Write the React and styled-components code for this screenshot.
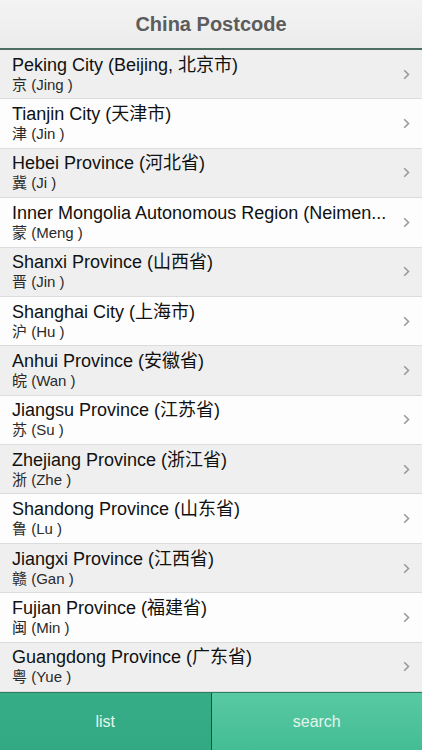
import React from "react";
import styled, { createGlobalStyle } from "styled-components";

const Global = createGlobalStyle`
  html, body { margin: 0; padding: 0; background: #fff; }
  body { font-family: "Liberation Sans", "Noto Sans CJK SC", Arial, sans-serif; }
  * { box-sizing: border-box; }
`;

const Screen = styled.div`
  width: 422px;
  height: 750px;
  display: flex;
  flex-direction: column;
  overflow: hidden;
`;

const Header = styled.header`
  height: 50px;
  flex: none;
  display: flex;
  align-items: center;
  justify-content: center;
  background: linear-gradient(#f3f3f3, #ececec);
  border-bottom: 2px solid #4f6e62;
`;

const Title = styled.h1`
  margin: 0;
  font-size: 20px;
  font-weight: bold;
  color: #5c5c5c;
`;

const List = styled.ul`
  list-style: none;
  margin: 0;
  padding: 0;
  flex: 1;
  display: grid;
  grid-template-rows: repeat(13, 1fr);
`;

const Row = styled.li`
  display: flex;
  align-items: center;
  padding: 0 12px 0 12px;
  background: ${(p) => (p.$alt ? "#fdfdfd" : "#efefef")};
  border-bottom: 1px solid #dcdcdc;
  min-width: 0;
`;

const Texts = styled.div`
  flex: 1;
  min-width: 0;
  display: flex;
  flex-direction: column;
  padding-right: 4px;
`;

const Name = styled.div`
  font-size: 18px;
  line-height: 21px;
  color: #111;
  white-space: nowrap;
`;

const Sub = styled.div`
  font-size: 15px;
  line-height: 18px;
  color: #2a2a2a;
`;

const Chevron = styled.svg`
  flex: none;
  width: 7px;
  height: 11px;
`;

const TabBar = styled.nav`
  height: 58px;
  flex: none;
  display: flex;
  border-top: 1px solid #2f7c62;
`;

const Tab = styled.button`
  flex: 1;
  border: none;
  margin: 0;
  padding: 0;
  font-family: inherit;
  font-size: 16px;
  color: #e3f6ee;
  background: ${(p) =>
    p.$active
      ? "linear-gradient(#36ad87, #33a983)"
      : "linear-gradient(#58c9a3, #44bd94)"};
  border-left: ${(p) => (p.$divider ? "1px solid #1f4f40" : "none")};
`;

const rows = [
  ["Peking City (Beijing, 北京市)", "京 (Jing )"],
  ["Tianjin City (天津市)", "津 (Jin )"],
  ["Hebei Province (河北省)", "冀 (Ji )"],
  ["Inner Mongolia Autonomous Region (Neimen...", "蒙 (Meng )"],
  ["Shanxi Province (山西省)", "晋 (Jin )"],
  ["Shanghai City (上海市)", "沪 (Hu )"],
  ["Anhui Province (安徽省)", "皖 (Wan )"],
  ["Jiangsu Province (江苏省)", "苏 (Su )"],
  ["Zhejiang Province (浙江省)", "浙 (Zhe )"],
  ["Shandong Province (山东省)", "鲁 (Lu )"],
  ["Jiangxi Province (江西省)", "赣 (Gan )"],
  ["Fujian Province (福建省)", "闽 (Min )"],
  ["Guangdong Province (广东省)", "粤 (Yue )"],
];

export default function App() {
  return (
    <Screen>
      <Global />
      <Header>
        <Title>China Postcode</Title>
      </Header>
      <List>
        {rows.map(([name, sub], i) => (
          <Row key={name} $alt={i % 2 === 1}>
            <Texts>
              <Name>{name}</Name>
              <Sub>{sub}</Sub>
            </Texts>
            <Chevron viewBox="0 0 7 11">
              <path d="M1.2 1.2 L5.5 5.5 L1.2 9.8" fill="none" stroke="#9a9a9a" strokeWidth="1.6" />
            </Chevron>
          </Row>
        ))}
      </List>
      <TabBar>
        <Tab $active>list</Tab>
        <Tab $divider>search</Tab>
      </TabBar>
    </Screen>
  );
}
